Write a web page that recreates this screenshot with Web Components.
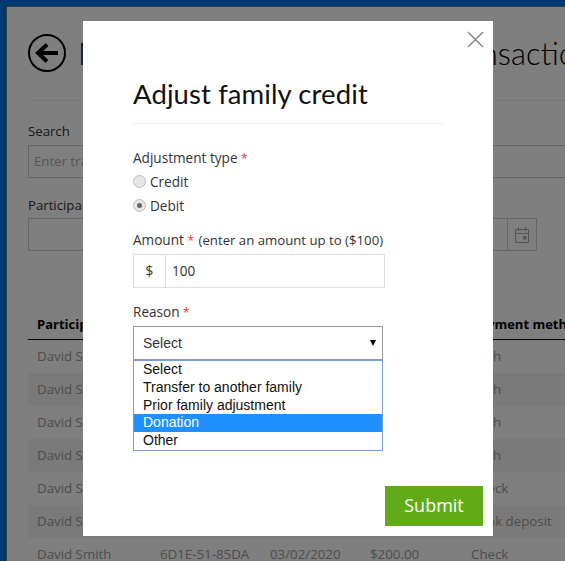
<!DOCTYPE html>
<html>
<head>
<meta charset="utf-8">
<title>Adjust family credit</title>
<style>
html, body { margin: 0; height: 100%; overflow: hidden; }
body { background: #fff; font-family: "Open Sans", sans-serif; }
</style>
</head>
<body>
<family-page></family-page>
<page-overlay></page-overlay>
<credit-modal></credit-modal>
<script>
class FamilyPage extends HTMLElement {
    constructor(){
        super();
        this.attachShadow({mode: "open"});
    }
    connectedCallback(){
        const rows = ['Cash', 'Cash', 'Cash', 'Cash', 'Check', 'Bank deposit', 'Check'];
        this.shadowRoot.innerHTML = `
        <style>
            :host { display: block; height: 561px; box-sizing: border-box; background: #0073de; padding: 6px 0 0 6px; overflow: hidden; color: #999; font-size: 13.200px; }
            .panel { box-sizing: border-box; height: 100%; width: 700px; background: #fff; border-left: 1px solid #777; border-top: 1px solid #777; padding: 27px 0 0 21px; }
            h1 { margin: 0; display: flex; align-items: center; gap: 12px; font: 300 31px "Lato", sans-serif; color: #000; height: 38px; white-space: nowrap; }
            hr { border: 0; border-top: 1px solid #eee; margin: 28px 0 0; }
            label { display: block; line-height: 19px; color: #333; }
            .search { margin-top: 21px; }
            .box { height: 31px; border: 1px solid #ccc; margin-top: 4px; padding-left: 5px; line-height: 31px; color: #b0b0b0; }
            .part { margin-top: 18px; width: 509px; }
            .part .box { margin-top: 3px; }
            .date { display: flex; justify-content: flex-end; }
            .date span { width: 28px; border-left: 1px solid #ccc; display: flex; align-items: center; justify-content: center; }
            .table { margin-top: 65px; display: grid; grid-template-columns: 123px 110px 100px 101px 1fr; font-size: 13.300px; }
            .table > div { display: contents; }
            .table span { height: 33px; line-height: 32px; padding-left: 9px; white-space: nowrap; }
            .head span { color: #000; font-size: 13px; font-weight: 700; border-bottom: 1px solid #000; height: 23px; line-height: 16px; }
            .row:nth-child(odd) span { background: #f5f5f5; }
        </style>
        <div class="panel">
        <h1>
            <svg width="38" height="38" viewBox="0 0 38 38"><circle cx="19" cy="19" r="18" fill="none" stroke="#000" stroke-width="2"/><path d="M30 19H11M19 10.500 10 19l9 8.500" fill="none" stroke="#000" stroke-width="4"/></svg>
            New family credit card sale transactions
        </h1>
        <hr>
        <div class="search"><label>Search</label><div class="box">Enter transaction ID</div></div>
        <div class="part">
            <label>Participant</label>
            <div class="box date"><span><svg width="16" height="18" viewBox="0 0 16 18" fill="none" stroke="#aaa"><path d="M1.500 3.500h13v13h-13zM1.500 7.500h13M4.500 1v4M11.500 1v4"/><rect x="9" y="10" width="3.500" height="3.500" fill="#aaa" stroke="none"/></svg></span></div>
        </div>
        <div class="table">
            <div class="head"><span>Participant</span><span>Transaction</span><span>Date</span><span>Amount</span><span>Payment method</span></div>
            ${rows.map(m => `<div class="row"><span>David Smith</span><span>6D1E-51-85DA</span><span>03/02/2020</span><span>$200.00</span><span>${m}</span></div>`).join('')}
        </div>
        </div>
        `;
    }
}

class PageOverlay extends HTMLElement {
    constructor(){
        super();
        this.attachShadow({mode: "open"});
        this.shadowRoot.innerHTML = `<style>:host { display: block; position: fixed; inset: 0; background: rgba(0,0,0,.5); }</style>`;
    }
}

class CreditModal extends HTMLElement {
    constructor(){
        super();
        this.attachShadow({mode: "open"});
    }
    connectedCallback(){
        this.shadowRoot.innerHTML = `
        <style>
            :host { display: block; position: fixed; left: 83px; top: 21px; width: 410px; height: 515px; box-sizing: border-box; background: #fff; padding: 56px 50px 0; color: #333; font-size: 13.600px; }
            .close { position: absolute; right: 9px; top: 10px; }
            h2 { margin: 0; font: 400 27.500px "Lato", sans-serif; letter-spacing: .1px; color: #111; line-height: 34px; }
            hr { border: 0; border-top: 1px solid #eee; margin: 12px 0 0; }
            label { display: block; line-height: 20px; }
            b { font-weight: 400; color: #e33; font-size: 12px; }
            .type { margin-top: 24px; }
            .radio { display: flex; align-items: center; gap: 4px; height: 24px; }
            .radio i { width: 11px; height: 11px; border: 1px solid #bbb; border-radius: 50%; background: #e6e6e6; display: flex; align-items: center; justify-content: center; }
            .radio i.on::after { content: ""; width: 5px; height: 5px; border-radius: 50%; background: #666; }
            .amount { margin-top: 13px; }
            .amount small { font-size: 13.200px; margin-left: 1px; }
            .group { display: flex; width: 252px; height: 34px; box-sizing: border-box; border: 1px solid #ddd; margin-top: 3px; line-height: 32px; }
            .group span { width: 31px; border-right: 1px solid #ddd; text-align: center; }
            .group div { padding-left: 6px; }
            .reason { margin-top: 14px; }
            .select { width: 250px; box-sizing: border-box; height: 34px; border: 1px solid #999; margin-top: 3px; padding: 0 6px 0 9px; display: flex; justify-content: space-between; align-items: center; font: 14px "Liberation Sans", sans-serif; }
            .select em { width: 0; height: 0; border: 3.500px solid transparent; border-top: 6px solid #000; border-bottom: 0; }
            .list { width: 250px; box-sizing: border-box; border: 1px solid #7a9cd9; font: 14px/17.800px "Liberation Sans", sans-serif; color: #111; }
            .list div { padding-left: 9px; height: 17.800px; }
            .list .sel { background: #1e90ff; color: #fff; }
            .submit { position: absolute; right: 10px; bottom: 10px; width: 98px; height: 40px; background: #62ab18; color: #fff; text-align: center; font: 18px/39px "Open Sans", sans-serif; }
        </style>
        <svg class="close" width="17" height="17" viewBox="0 0 17 17"><path d="M1 1l15 15M16 1L1 16" stroke="#888" stroke-width="1.500" fill="none"/></svg>
        <h2>Adjust family credit</h2>
        <hr>
        <div class="type">
            <label>Adjustment type <b>*</b></label>
            <div class="radio"><i></i>Credit</div>
            <div class="radio"><i class="on"></i>Debit</div>
        </div>
        <div class="amount">
            <label>Amount <b>*</b> <small>(enter an amount up to ($100)</small></label>
            <div class="group"><span>$</span><div>100</div></div>
        </div>
        <div class="reason">
            <label>Reason <b>*</b></label>
            <div class="select">Select<em></em></div>
            <div class="list">
                <div>Select</div>
                <div>Transfer to another family</div>
                <div>Prior family adjustment</div>
                <div class="sel">Donation</div>
                <div>Other</div>
            </div>
        </div>
        <div class="submit">Submit</div>
        `;
    }
}

customElements.define('family-page', FamilyPage);
customElements.define('page-overlay', PageOverlay);
customElements.define('credit-modal', CreditModal);
</script>
</body>
</html>
